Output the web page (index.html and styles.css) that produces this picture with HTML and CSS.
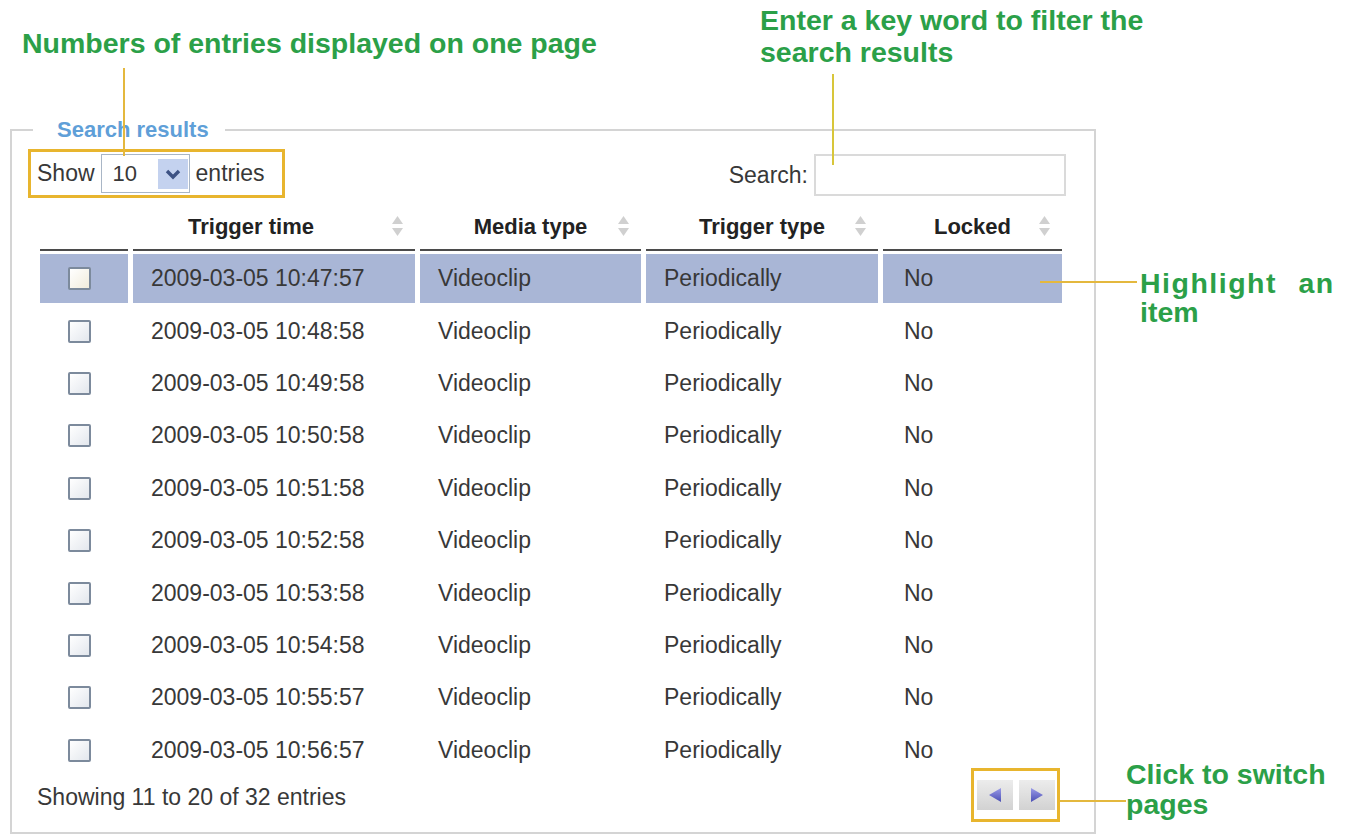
FILE: index.html
```html
<!DOCTYPE html>
<html lang="en">
<head>
<meta charset="UTF-8" />
<meta name="viewport" content="width=device-width, initial-scale=1" />
<title>Search results</title>
<link rel="stylesheet" href="styles.css">
</head>
<body>

<div class="figure">
  <fieldset class="results">
    <legend>Search results</legend>

    <div class="controls">
      <div class="length">
        <span>Show</span>
        <span class="select">
          <span class="select-value">10</span>
          <span class="select-arrow">
            <svg width="16" height="12" viewBox="0 0 16 12"><polyline points="2,3 8,9 14,3" fill="none" stroke="#3d5284" stroke-width="3.4"/></svg>
          </span>
        </span>
        <span>entries</span>
      </div>
      <label class="search">Search: <input type="text" /></label>
    </div>

    <table class="grid">
      <colgroup>
        <col class="c-check" />
        <col class="c-time" />
        <col class="c-media" />
        <col class="c-trigger" />
        <col class="c-locked" />
      </colgroup>
      <thead>
        <tr>
          <th></th>
          <th class="first">Trigger time<span class="sort"><svg width="11" height="22" viewBox="0 0 11 22"><polygon points="0,9 5.5,1 11,9" fill="#d0d0d0"/><polygon points="0,13 5.5,21 11,13" fill="#d0d0d0"/></svg></span></th>
          <th>Media type<span class="sort"><svg width="11" height="22" viewBox="0 0 11 22"><polygon points="0,9 5.5,1 11,9" fill="#d0d0d0"/><polygon points="0,13 5.5,21 11,13" fill="#d0d0d0"/></svg></span></th>
          <th>Trigger type<span class="sort"><svg width="11" height="22" viewBox="0 0 11 22"><polygon points="0,9 5.5,1 11,9" fill="#d0d0d0"/><polygon points="0,13 5.5,21 11,13" fill="#d0d0d0"/></svg></span></th>
          <th>Locked<span class="sort"><svg width="11" height="22" viewBox="0 0 11 22"><polygon points="0,9 5.5,1 11,9" fill="#d0d0d0"/><polygon points="0,13 5.5,21 11,13" fill="#d0d0d0"/></svg></span></th>
        </tr>
      </thead>
      <tbody>
        <tr class="selected"><td><span class="check"></span></td><td>2009-03-05 10:47:57</td><td>Videoclip</td><td>Periodically</td><td>No</td></tr>
        <tr><td><span class="check"></span></td><td>2009-03-05 10:48:58</td><td>Videoclip</td><td>Periodically</td><td>No</td></tr>
        <tr><td><span class="check"></span></td><td>2009-03-05 10:49:58</td><td>Videoclip</td><td>Periodically</td><td>No</td></tr>
        <tr><td><span class="check"></span></td><td>2009-03-05 10:50:58</td><td>Videoclip</td><td>Periodically</td><td>No</td></tr>
        <tr><td><span class="check"></span></td><td>2009-03-05 10:51:58</td><td>Videoclip</td><td>Periodically</td><td>No</td></tr>
        <tr><td><span class="check"></span></td><td>2009-03-05 10:52:58</td><td>Videoclip</td><td>Periodically</td><td>No</td></tr>
        <tr><td><span class="check"></span></td><td>2009-03-05 10:53:58</td><td>Videoclip</td><td>Periodically</td><td>No</td></tr>
        <tr><td><span class="check"></span></td><td>2009-03-05 10:54:58</td><td>Videoclip</td><td>Periodically</td><td>No</td></tr>
        <tr><td><span class="check"></span></td><td>2009-03-05 10:55:57</td><td>Videoclip</td><td>Periodically</td><td>No</td></tr>
        <tr><td><span class="check"></span></td><td>2009-03-05 10:56:57</td><td>Videoclip</td><td>Periodically</td><td>No</td></tr>
      </tbody>
    </table>

    <div class="footer">
      <span class="info">Showing 11 to 20 of 32 entries</span>
      <div class="paging">
        <button class="page-btn" type="button">
          <svg width="14" height="16" viewBox="0 0 14 16"><defs><linearGradient id="tl" x1="0" y1="0" x2="0" y2="1"><stop offset="0" stop-color="#9a9be8"/><stop offset="1" stop-color="#4b4fb4"/></linearGradient></defs><polygon points="13,1 1,8 13,15" fill="url(#tl)"/></svg>
        </button>
        <button class="page-btn" type="button">
          <svg width="14" height="16" viewBox="0 0 14 16"><defs><linearGradient id="tr" x1="0" y1="0" x2="0" y2="1"><stop offset="0" stop-color="#9a9be8"/><stop offset="1" stop-color="#4b4fb4"/></linearGradient></defs><polygon points="1,1 13,8 1,15" fill="url(#tr)"/></svg>
        </button>
      </div>
    </div>
  </fieldset>

  <!-- callouts -->
  <p class="note note-entries">Numbers of entries displayed on one page</p>
  <p class="note note-search">Enter a key word to filter the<br>search results</p>
  <p class="note note-highlight"><span class="spread">Highlight an</span><br>item</p>
  <p class="note note-pages">Click to switch<br>pages</p>

  <span class="leader leader-entries"></span>
  <span class="leader leader-search"></span>
  <span class="leader leader-highlight"></span>
  <span class="leader leader-pages"></span>
</div>

</body>
</html>
```

FILE: styles.css
```css
body {
  margin: 0;
  background: #fff;
  font-family: "Liberation Sans", Arial, sans-serif;
  color: #383838;
}
.figure {
  position: relative;
  width: 1345px;
  height: 834px;
  overflow: hidden;
}

/* panel */
.results {
  box-sizing: border-box;
  width: 1086px;
  margin: 117px 0 0 10px;
  padding: 0 0 10px;
  border: 2px solid #d4d4d4;
  min-inline-size: 0;
}
.results legend {
  margin-left: 21px;
  padding: 0 16px 0 24px;
  font-size: 22px;
  line-height: 26px;
  font-weight: bold;
  color: #5f9fd8;
}

.controls {
  display: flex;
  justify-content: space-between;
  align-items: center;
  margin: 6px 28px 0 16px;
  font-size: 23px;
}
.length {
  box-sizing: border-box;
  display: flex;
  align-items: center;
  gap: 6px;
  height: 49px;
  padding: 0 17px 0 6px;
  border: 3px solid #e8b52e;
}
.select {
  box-sizing: border-box;
  display: flex;
  align-items: center;
  justify-content: space-between;
  width: 89px;
  height: 39px;
  padding: 0 1px 0 11px;
  border: 1px solid #a9b6c6;
  background: #fff;
}
.select-value {
  font-size: 22px;
}
.select-arrow {
  display: flex;
  align-items: center;
  justify-content: center;
  width: 30px;
  height: 30px;
  background: #c4d2ef;
}
.search {
  display: flex;
  align-items: center;
  gap: 6px;
  margin-top: 3px;
}
.search input {
  box-sizing: border-box;
  width: 252px;
  height: 42px;
  border: 2px solid #dadada;
  margin: 0;
}

/* table */
.grid {
  table-layout: fixed;
  width: 1032px;
  margin: 3px 0 0 23px;
  border-collapse: separate;
  border-spacing: 5px 3px;
  font-size: 23px;
}
.c-check { width: 88px; }
.c-time { width: 282px; }
.c-media { width: 221px; }
.c-trigger { width: 232px; }
.c-locked { width: 179px; }

.grid thead tr {
  height: 47px;
}
.grid th {
  position: relative;
  padding: 0;
  border-bottom: 2px solid #4b4b4b;
  font-size: 22px;
  font-weight: bold;
  color: #222;
  text-align: center;
  vertical-align: middle;
}
.grid th.first {
  padding-right: 46px;
}
.sort {
  position: absolute;
  right: 12px;
  top: 11px;
  display: flex;
}
.grid tbody tr {
  height: 49.4px;
}
.grid td {
  padding: 0 0 0 18px;
  vertical-align: middle;
  white-space: nowrap;
}
.grid td:first-child {
  padding-left: 28px;
}
.grid td:last-child {
  padding-left: 21px;
}
.grid tr.selected td {
  background: #a9b6d6;
}
.check {
  box-sizing: border-box;
  display: block;
  width: 23px;
  height: 23px;
  border: 2px solid #7c8a9c;
  border-radius: 2px;
  background: linear-gradient(135deg, #ffffff, #e3e7ed);
}
.selected .check {
  background: linear-gradient(135deg, #ffffff, #f1ecdc);
}

/* footer */
.footer {
  display: flex;
  justify-content: space-between;
  align-items: center;
  margin: -10px 34px 0 25px;
  font-size: 23px;
}
.info {
  padding-top: 6px;
}
.paging {
  box-sizing: border-box;
  display: flex;
  gap: 6px;
  width: 89px;
  height: 54px;
  padding: 9px 2px 9px 3px;
  border: 3px solid #e8b52e;
}
.page-btn {
  display: flex;
  align-items: center;
  justify-content: center;
  width: 36px;
  height: 30px;
  padding: 0;
  border: none;
  background: linear-gradient(#ececec, #d2d2d2);
}

/* callouts */
.note {
  position: absolute;
  margin: 0;
  font-size: 28.5px;
  font-weight: bold;
  color: #2ba048;
  white-space: nowrap;
}
.note-entries {
  left: 22px;
  top: 28px;
  line-height: 31px;
}
.note-search {
  left: 760px;
  top: 4px;
  line-height: 32px;
}
.note-highlight {
  left: 1140px;
  top: 269px;
  line-height: 29px;
}
.note-highlight .spread {
  letter-spacing: 1.5px;
  word-spacing: 12px;
}
.note-pages {
  left: 1126px;
  top: 759px;
  line-height: 30px;
}
.leader {
  position: absolute;
  background: #e4b83e;
}
.leader-entries {
  left: 123px;
  top: 68px;
  width: 2px;
  height: 88px;
}
.leader-search {
  left: 832px;
  top: 74px;
  width: 2px;
  height: 91px;
  background: #d8c63a;
}
.leader-highlight {
  left: 1040px;
  top: 281px;
  width: 97px;
  height: 2px;
}
.leader-pages {
  left: 1060px;
  top: 800px;
  width: 66px;
  height: 2px;
}
```
